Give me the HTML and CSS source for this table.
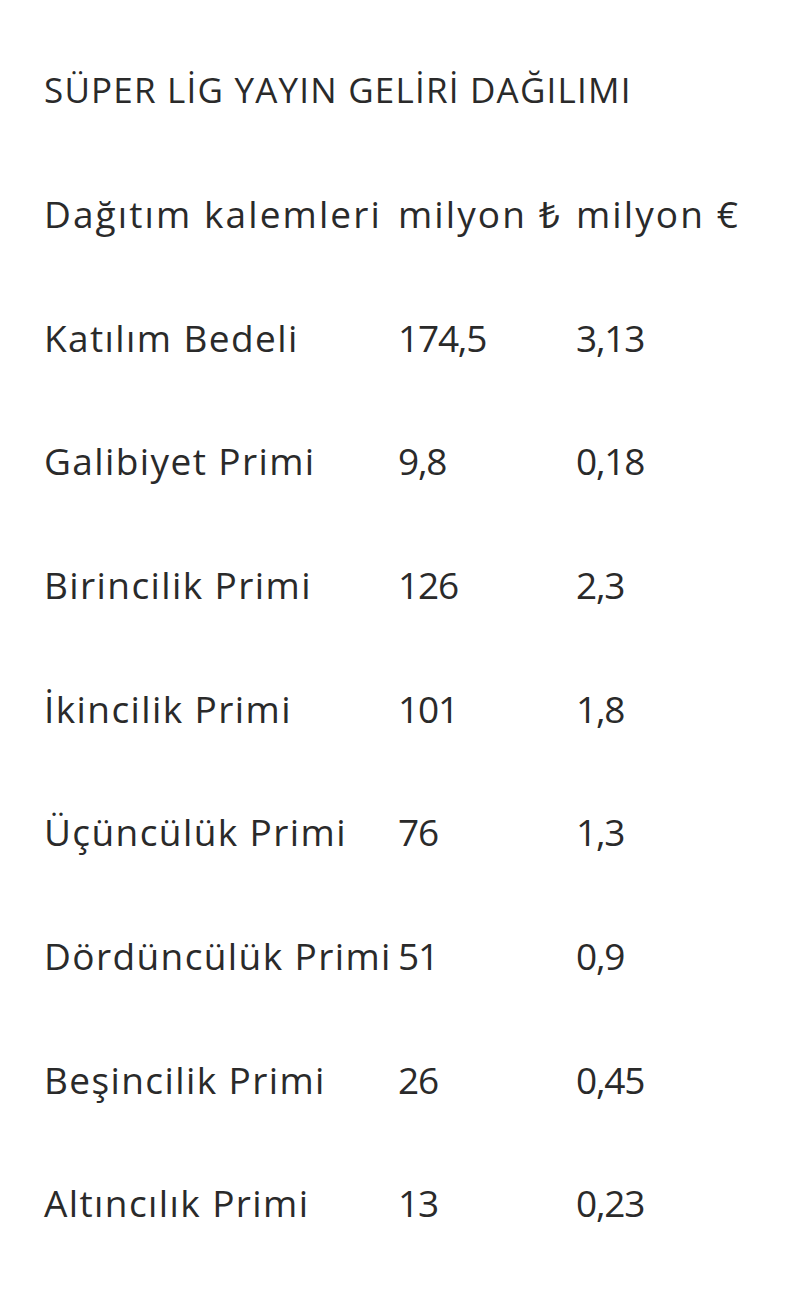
FILE: index.html
```html
<!DOCTYPE html>
<html lang="tr">
<head>
<meta charset="utf-8">
<link rel="stylesheet" href="styles.css">
</head>
<body>
<div class="page">
  <div class="title line">SÜPER LİG YAYIN GELİRİ DAĞILIMI</div>
  <div class="line row head"><span>Dağıtım kalemleri</span><span>milyon ₺</span><span>milyon €</span></div>
  <div class="line row"><span class="label">Katılım Bedeli</span><span>174,5</span><span>3,13</span></div>
  <div class="line row"><span class="label">Galibiyet Primi</span><span>9,8</span><span>0,18</span></div>
  <div class="line row"><span class="label">Birincilik Primi</span><span>126</span><span>2,3</span></div>
  <div class="line row"><span class="label">İkincilik Primi</span><span>101</span><span>1,8</span></div>
  <div class="line row"><span class="label">Üçüncülük Primi</span><span>76</span><span>1,3</span></div>
  <div class="line row"><span class="label">Dördüncülük Primi</span><span>51</span><span>0,9</span></div>
  <div class="line row"><span class="label">Beşincilik Primi</span><span>26</span><span>0,45</span></div>
  <div class="line row"><span class="label">Altıncılık Primi</span><span>13</span><span>0,23</span></div>
</div>
</body>
</html>
```
FILE: styles.css
```css
html, body {
  margin: 0;
  padding: 0;
  background: #ffffff;
}
.page {
  padding: 28px 0 0 44px;
  font-family: "Open Sans", "Noto Sans", sans-serif;
  color: #2a2a2a;
}
.line {
  height: 123.67px;
  display: flex;
  align-items: center;
  white-space: nowrap;
}
.title {
  font-size: 35px;
  letter-spacing: 1.2px;
}
.row {
  display: grid;
  grid-template-columns: 354px 178px auto;
  font-size: 37px;
  letter-spacing: -1.2px;
}
.head {
  letter-spacing: 2.1px;
}
.label {
  letter-spacing: 1.4px;
}
```
